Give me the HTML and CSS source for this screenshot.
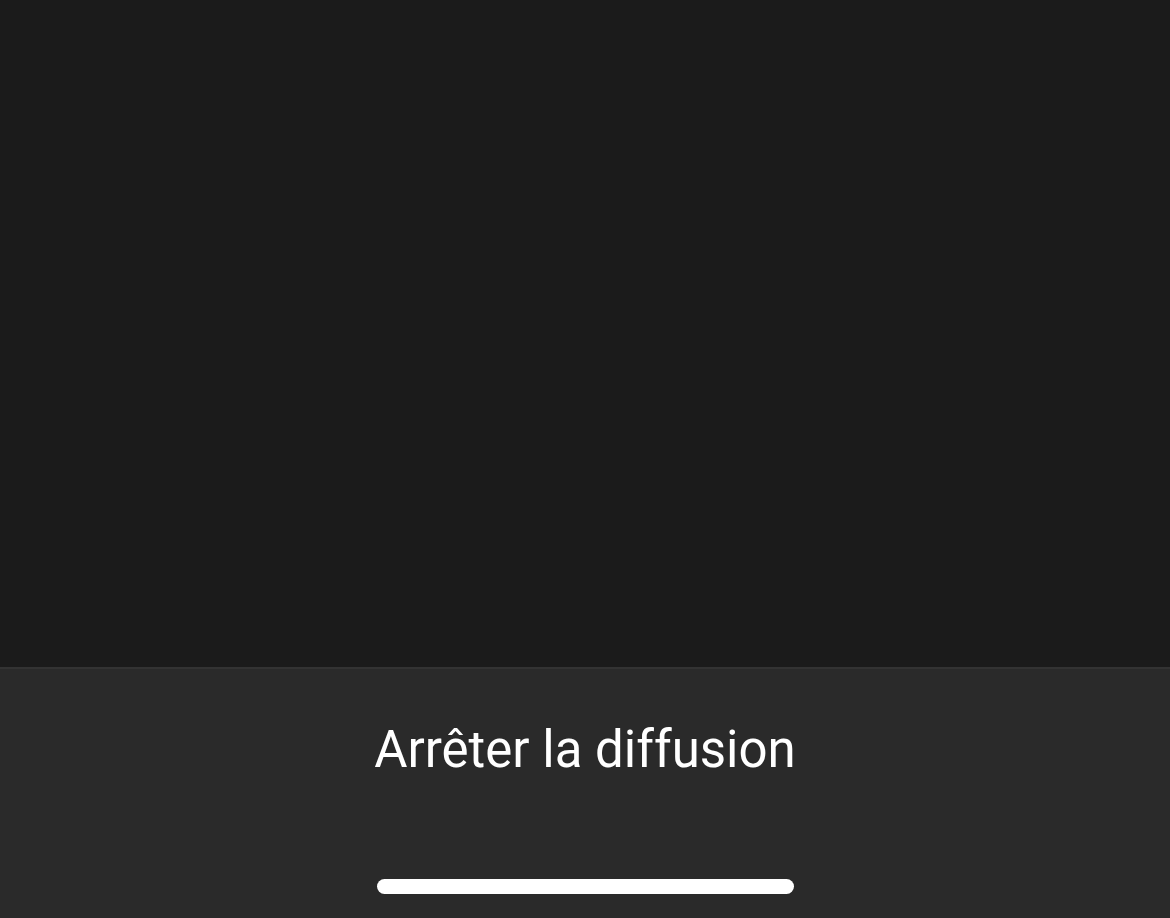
FILE: index.html
```html
<!DOCTYPE html>
<html lang="fr">
<head>
    <meta charset="UTF-8">
    <meta name="viewport" content="width=device-width, initial-scale=1.0">
    <title>Arrêter la diffusion</title>
    <link rel="stylesheet" href="styles.css">
</head>
<body>
    <div class="screen">
        <div class="backdrop"></div>
        <div class="sheet">
            <button class="action" type="button">Arrêter la diffusion</button>
            <div class="home-indicator"></div>
        </div>
    </div>
</body>
</html>
```

FILE: styles.css
```css
body {
    margin: 0;
    background-color: #1b1b1b;
    font-family: Roboto, "Noto Sans", sans-serif;
}

.screen {
    display: flex;
    flex-direction: column;
    height: 918px;
}

.backdrop {
    height: 667px;
    background-color: #1b1b1b;
}

.sheet {
    flex: 1;
    display: flex;
    flex-direction: column;
    align-items: center;
    background-color: #2a2a2a;
    border-top: 2px solid #333333;
}

.action {
    margin-top: 50px;
    padding: 0;
    border: none;
    background: none;
    color: #ffffff;
    font-family: inherit;
    font-size: 51px;
    line-height: 62px;
    cursor: pointer;
}

.home-indicator {
    margin-top: 98px;
    width: 417px;
    height: 15px;
    border-radius: 8px;
    background-color: #ffffff;
}
```
